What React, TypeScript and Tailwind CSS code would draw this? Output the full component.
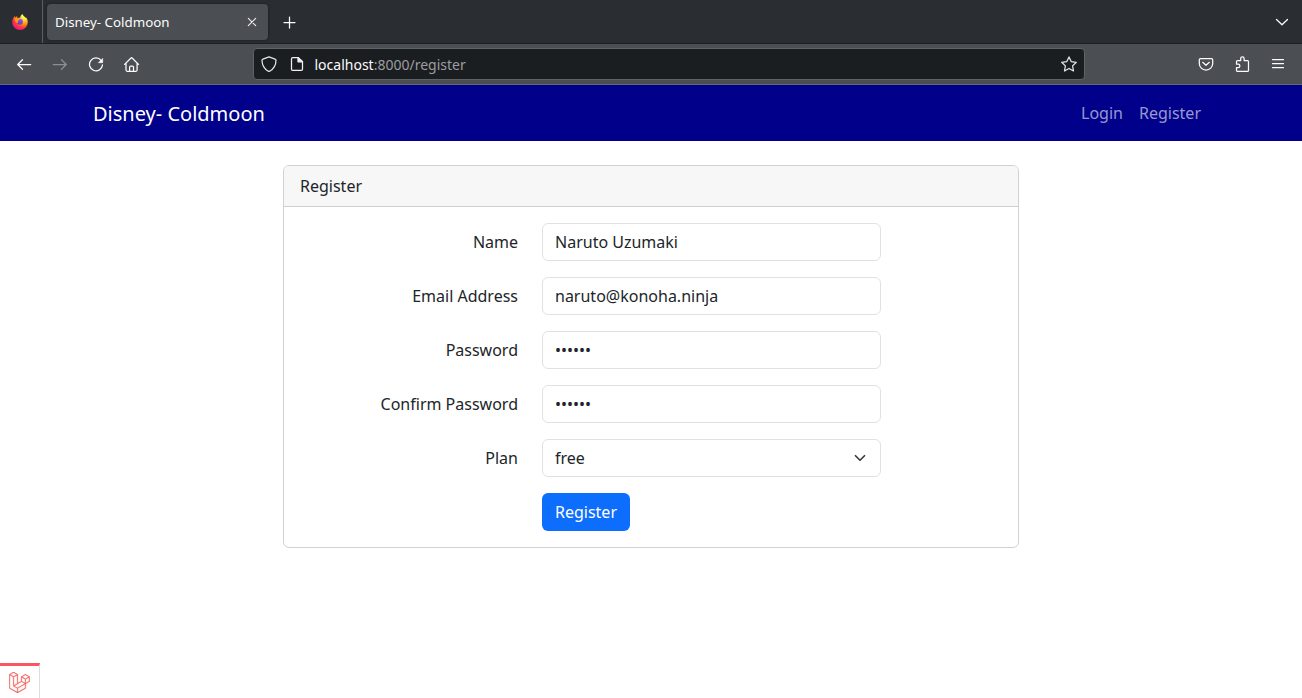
import type { ReactNode } from "react";
import { SiLaravel } from "react-icons/si";

function Glyph({ children, dim = false }: { children: ReactNode; dim?: boolean }) {
  return (
    <span className="flex h-10 w-9 items-center justify-center">
      <svg
        viewBox="0 0 16 16"
        className={dim ? "size-4 text-[#8d8f92]" : "size-4 text-[#fcfcfc]"}
        fill="none"
        stroke="currentColor"
        strokeWidth="1.25"
        strokeLinecap="round"
        strokeLinejoin="round"
      >
        {children}
      </svg>
    </span>
  );
}

function FirefoxLogo() {
  return (
    <svg viewBox="0 0 16 16" className="size-4">
      <defs>
        <radialGradient id="flame" cx="0.8" cy="0.12" r="1">
          <stop offset="0.15" stopColor="#fff44f" />
          <stop offset="0.48" stopColor="#ff980e" />
          <stop offset="0.75" stopColor="#ff3647" />
          <stop offset="1" stopColor="#e31587" />
        </radialGradient>
        <linearGradient id="globe" x1="0.7" y1="0" x2="0.3" y2="1">
          <stop offset="0" stopColor="#9059ff" />
          <stop offset="1" stopColor="#5b3fb0" />
        </linearGradient>
      </defs>
      <path
        d="M10.6 0c-1.5.9-2.3 2.2-2.3 3.500-1 0-2 .3-2.600.7-.6-.4-.6-1.500-.4-2.200-.8.3-1.400.9-1.900 1.500-.4-.5-.4-1.200-.3-1.700C1.300 3.200.2 5.500.2 8.200a7.800 7.800 0 0 0 15.600 0c0-2-.7-3.800-1.900-5-.1.300 0 .7 0 1C12.900 2.400 10.900 2 10.600 0z"
        fill="url(#flame)"
      />
      <circle cx="8" cy="7.700" r="2.900" fill="url(#globe)" />
      <path d="M2.600 4.300c1.100-.5 2.300-.4 3.300.3.700.2 1.800.2 2.200.5-.3 1-1.600 1-2 1.600-.3.700.3 1.200-.2 2-.9-.1-1.500-.1-2-.8-1-.8-1.500-2.200-1.300-3.600z" fill="#ff980e" />
    </svg>
  );
}

function TabStrip() {
  return (
    <div className="flex h-11 items-start border-b border-[#1d2023] bg-[#2a2e32]">
      <div className="flex h-[43px] w-[43px] items-center border-r border-[#5c5f62] pl-3">
        <FirefoxLogo />
      </div>
      <div className="mt-1 ml-1 flex h-9 w-[221px] items-center justify-between rounded bg-[#4b4e52] pr-[11px] pl-2 shadow-[0_0_3px_rgba(0,0,0,0.45)]">
        <span className="text-[13.333px] text-[#fcfcfc]">Disney- Coldmoon</span>
        <svg viewBox="0 0 10 10" className="size-[10px]" stroke="#f2f2f2" strokeWidth="1.1" strokeLinecap="round">
          <path d="M1.300 1.300l7.400 7.400M8.700 1.300L1.300 8.700" />
        </svg>
      </div>
      <div className="ml-[3px] flex h-11 items-center">
        <Glyph>
          <path d="M8.500 3v11M3 8.500h11" />
        </Glyph>
      </div>
      <div className="mr-[2px] ml-auto flex h-[43px] items-center">
        <Glyph>
          <path d="M2.500 5.500l5.500 5.300 5.500-5.300" />
        </Glyph>
      </div>
    </div>
  );
}

function Toolbar() {
  return (
    <div className="flex h-[41px] items-start border-b border-[#65686b] bg-[#4b4e52] px-[6px]">
      <Glyph>
        <path d="M1.700 8.500h13M6.500 3.700L1.700 8.500l4.800 4.800" />
      </Glyph>
      <Glyph dim>
        <path d="M1.300 8.500h13M9.500 3.700l4.800 4.800-4.800 4.800" />
      </Glyph>
      <Glyph>
        <path d="M13.200 4.500A6.500 6.500 0 1 0 14.500 8.800" />
        <path d="M14.700 2.200v4.500h-4.500z" fill="currentColor" stroke="none" />
        <path d="M14.700 2.500v4.200h-4.200" strokeWidth=".6" />
      </Glyph>
      <Glyph>
        <path d="M.6 8.400L7 2a.8.800 0 0 1 1.100 0l6.400 6.400M2 7v7.100c0 .7.500 1.200 1.200 1.200h8.700c.7 0 1.200-.5 1.200-1.200V7M5.600 15.300V11c0-.6.400-1 1-1h1.900c.6 0 1 .4 1 1v4.300" />
      </Glyph>
      <div className="mt-1 ml-[103px] flex h-8 w-[832px] items-center rounded border border-[#606366] bg-[#1b1e20] pr-[7px] pl-[7px]">
        <svg viewBox="0 0 16 16" className="size-4" fill="none" stroke="#e4e5e6" strokeWidth="1.250" strokeLinejoin="round">
          <path d="M8 .8L1.900 3.100c-.6.200-.9.600-.9 1.200.1 5 2.200 8.700 6.300 10.900.5.200.9.200 1.400 0C12.800 13 14.900 9.300 15 4.300c0-.6-.3-1-.9-1.200z" />
        </svg>
        <svg viewBox="0 0 16 16" className="ml-3 size-4" fill="none" stroke="#f0f0f0" strokeWidth="1.250" strokeLinejoin="round">
          <path d="M3.700 1.600h5.600l4.200 4.200v7.400c0 .7-.5 1.200-1.200 1.200H3.700c-.7 0-1.200-.5-1.200-1.200V2.800c0-.7.5-1.200 1.200-1.200z" />
          <path d="M9 1.600v4.200h4.500z" fill="#f0f0f0" />
        </svg>
        <span className="ml-[9.500px] pt-[2px] text-[14px] leading-5 text-[#9b9da0]">
          <span className="text-[#fcfcfc]">localhost</span>:8000/register
        </span>
        <svg viewBox="0 0 16 16" className="ml-auto size-4" fill="none" stroke="#e4e5e6" strokeWidth="1.250" strokeLinejoin="round">
          <path d="M8 .9l2.200 4.700 5.100.7-3.700 3.600.9 5.100L8 12.500l-4.500 2.500.9-5.100L.7 6.300l5.100-.7z" />
        </svg>
      </div>
      <div className="ml-auto flex">
        <Glyph>
          <path d="M2.500 2.500h11c.7 0 1.200.5 1.200 1.200V7.500a6.700 6.500 0 0 1-13.400 0V3.700c0-.7.5-1.200 1.200-1.200zM4.700 6.300L8 9.300l3.300-3" />
        </Glyph>
        <Glyph>
          <path d="M3.500 4.500H6.700V2.500a1.700 1.700 0 0 1 3.400 0v2h3.400c.6 0 1 .4 1 1v8.900c0 .6-.4 1-1 1H3.500c-.6 0-1-.4-1-1V11.600H4.200a1.700 1.700 0 0 0 0-3.400H2.500V5.500c0-.6.4-1 1-1z" />
        </Glyph>
        <Glyph>
          <path d="M2.500 3.500h11M2.500 7.500h11M2.500 11.500h11" />
        </Glyph>
      </div>
    </div>
  );
}

function Field({ label, children }: { label: string; children: ReactNode }) {
  return (
    <div className="flex h-[38px] items-center">
      <span className="w-[234px] text-right">{label}</span>
      <div className="ml-6 flex h-[38px] w-[339px] items-center justify-between rounded-md border border-[#dee2e6] bg-white px-3">
        {children}
      </div>
    </div>
  );
}

function RegisterCard() {
  return (
    <section className="mx-auto mt-6 h-[383px] w-[736px] overflow-hidden rounded-md border border-[#d0d1d2] bg-white">
      <h1 className="flex h-[41px] items-center border-b border-[#cfcfcf] bg-[#f7f7f7] px-4">Register</h1>
      <form className="flex flex-col gap-4 pt-4">
        <Field label="Name">Naruto Uzumaki</Field>
        <Field label="Email Address">naruto@konoha.ninja</Field>
        <Field label="Password">••••••</Field>
        <Field label="Confirm Password">••••••</Field>
        <Field label="Plan">
          <span>free</span>
          <svg viewBox="0 0 16 16" className="h-3 w-4" fill="none" stroke="#343a40" strokeWidth="2.2" strokeLinecap="round" strokeLinejoin="round">
            <path d="M2 5l6 6 6-6" />
          </svg>
        </Field>
        <button type="button" className="ml-[258px] h-[38px] w-[88px] rounded-md bg-[#0d6efd] text-white">
          Register
        </button>
      </form>
    </section>
  );
}

export default function App() {
  return (
    <div className="flex h-[698px] w-[1302px] flex-col overflow-hidden bg-white font-['Noto_Sans',sans-serif] text-base leading-6 text-[#212529]">
      <TabStrip />
      <Toolbar />
      <nav className="flex h-14 items-center justify-between bg-[#00008b] pr-[101px] pl-[93px]">
        <span className="pt-[2px] text-xl leading-[30px] text-white">Disney- Coldmoon</span>
        <div className="flex gap-4 text-white/60">
          <span>Login</span>
          <span>Register</span>
        </div>
      </nav>
      <main className="flex-1">
        <RegisterCard />
      </main>
      <div className="flex h-[35px] w-10 items-center border-t-3 border-r border-t-[#fa5661] border-r-[#dddddd] pt-px pl-[9px]">
        <SiLaravel className="size-[21px] stroke-[#f4645f] stroke-[0.4] text-[#f4645f]" />
      </div>
    </div>
  );
}
